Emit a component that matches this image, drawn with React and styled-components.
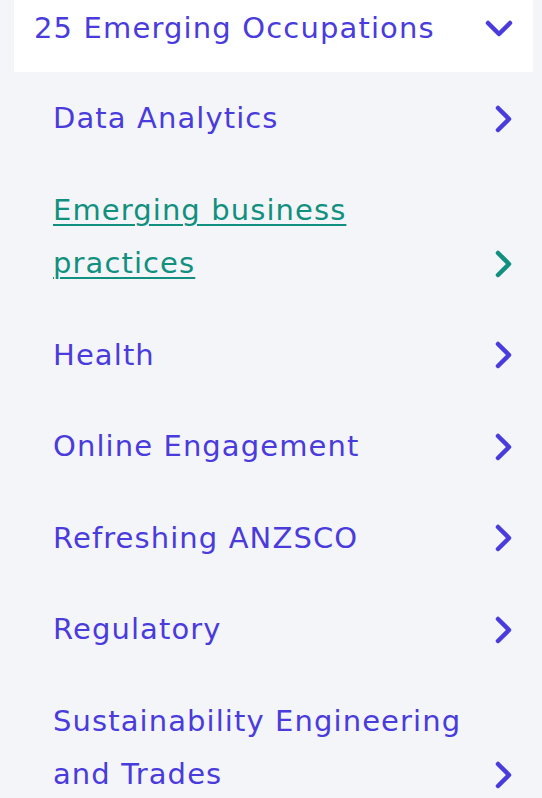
import React from "react";
import styled, { createGlobalStyle } from "styled-components";

const Global = createGlobalStyle`
  html, body { margin: 0; padding: 0; background: #f4f5f9; }
  body { font-family: "DejaVu Sans", "Liberation Sans", sans-serif; }
`;

const Wrap = styled.nav`
  padding: 0 9px 0 14px;
  width: 542px;
  box-sizing: border-box;
`;

const Header = styled.div`
  background: #ffffff;
  display: flex;
  align-items: flex-start;
  justify-content: space-between;
  padding: 2px 20px 17px 20px;
  height: 72px;
  box-sizing: border-box;
`;

const HeaderTitle = styled.span`
  font-size: 29px;
  letter-spacing: 1.15px;
  line-height: 53px;
  color: #4a3bdc;
  font-weight: 400;
`;

const IconBox = styled.span`
  display: flex;
  align-items: center;
  justify-content: center;
  height: 53.5px;
  flex: none;
`;

const List = styled.ul`
  list-style: none;
  margin: 0;
  padding: 0 21px 0 39px;
`;

const Item = styled.li`
  display: flex;
  align-items: flex-end;
  justify-content: space-between;
  padding: 20px 0 18px;
  gap: 20px;
`;

const Link = styled.a`
  font-size: 29px;
  letter-spacing: 1.1px;
  line-height: 53.5px;
  color: ${(p) => (p.$active ? "#11907f" : "#4a3bdc")};
  text-decoration: ${(p) => (p.$active ? "underline" : "none")};
  text-decoration-thickness: 2px;
  text-underline-offset: 4px;
  max-width: 415px;
`;

const ChevronDown = () => (
  <svg width="28" height="18" viewBox="0 0 28 18">
    <polyline points="3,3 14,14 25,3" fill="none" stroke="#4a3bdc" strokeWidth="4.5" strokeLinecap="round" strokeLinejoin="round" />
  </svg>
);

const ChevronRight = ({ color }) => (
  <svg width="18" height="28" viewBox="0 0 18 28">
    <polyline points="4,3 15,14 4,25" fill="none" stroke={color} strokeWidth="4.5" strokeLinecap="round" strokeLinejoin="round" />
  </svg>
);

const items = [
  { label: "Data Analytics" },
  { label: "Emerging business practices", active: true },
  { label: "Health" },
  { label: "Online Engagement" },
  { label: "Refreshing ANZSCO" },
  { label: "Regulatory" },
  { label: "Sustainability Engineering and Trades" },
];

export default function App() {
  return (
    <>
      <Global />
      <Wrap>
        <Header>
          <HeaderTitle>25 Emerging Occupations</HeaderTitle>
          <IconBox>
            <ChevronDown />
          </IconBox>
        </Header>
        <List>
          {items.map((it) => (
            <Item key={it.label}>
              <Link href="#" $active={it.active}>
                {it.label}
              </Link>
              <IconBox>
                <ChevronRight color={it.active ? "#11907f" : "#4a3bdc"} />
              </IconBox>
            </Item>
          ))}
        </List>
      </Wrap>
    </>
  );
}
